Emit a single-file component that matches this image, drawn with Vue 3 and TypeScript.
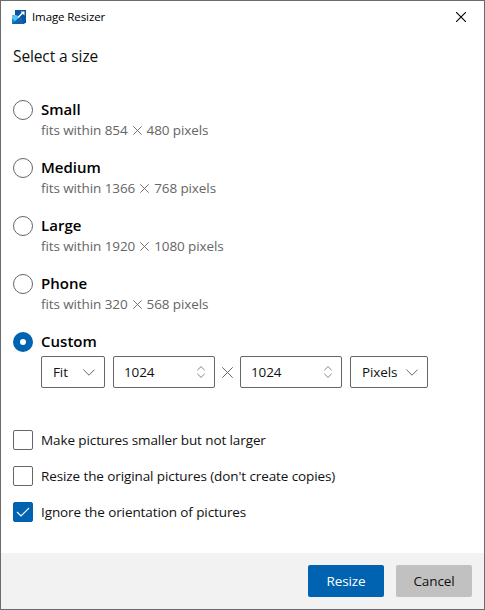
<script setup lang="ts">
import { ref } from 'vue'

interface SizePreset {
  name: string
  width?: number
  height?: number
}

const sizes: SizePreset[] = [
  { name: 'Small', width: 854, height: 480 },
  { name: 'Medium', width: 1366, height: 768 },
  { name: 'Large', width: 1920, height: 1080 },
  { name: 'Phone', width: 320, height: 568 },
  { name: 'Custom' },
]
const selected = ref('Custom')
const customWidth = ref(1024)
const customHeight = ref(1024)

const options = ref([
  { label: 'Make pictures smaller but not larger', checked: false, cls: 'shrink' },
  { label: "Resize the original pictures (don't create copies)", checked: false, cls: 'replace' },
  { label: 'Ignore the orientation of pictures', checked: true, cls: 'orient' },
])
</script>

<template>
  <div class="window">
    <header class="titlebar">
      <svg class="app-icon" width="14" height="14" viewBox="0 0 14 14">
        <path d="M3 0H14V13H10L3 6Z" fill="#0a55a0" />
        <path d="M0 5H5L10 10V14H0Z" fill="#1583d6" />
        <path d="M0 5H4L7 8L3.5 11.5L0 8.5Z" fill="#50c8f4" />
        <path d="M0 14L7 7.5L13 14Z" fill="#0f62b0" />
        <path d="M6 7.5L11 2.5" fill="none" stroke="#fff" stroke-width="1.6" />
        <path d="M8.5 1.5H12.5V5.5Z" fill="#fff" />
      </svg>
      <span class="title">Image Resizer</span>
      <button class="close" aria-label="Close">
        <svg width="10" height="10" viewBox="0 0 10 10"><path d="M0 0L10 10M10 0L0 10" stroke="#000" stroke-width="1.1" /></svg>
      </button>
    </header>

    <main class="content">
      <h1>Select a size</h1>

      <div class="sizes">
        <div v-for="s in sizes" :key="s.name" class="size" @click="selected = s.name">
          <i class="radio" :class="{ on: selected === s.name }"></i>
          <div class="info">
            <div class="name">{{ s.name }}</div>
            <div v-if="s.width" class="detail">
              <span>fits within {{ s.width }}</span>
              <svg width="9" height="9" viewBox="0 0 9 9"><path d="M.3 .3L8.7 8.7M8.7 .3L.3 8.7" stroke="#666" stroke-width=".9" /></svg>
              <span>{{ s.height }} pixels</span>
            </div>
            <div v-else class="custom">
              <div class="box fit">
                <span>Fit</span>
                <svg width="12" height="7" viewBox="0 0 12 7"><path d="M.4 .6L6 6.2L11.6 .6" fill="none" stroke="#666" /></svg>
              </div>
              <div class="box number">
                <span>{{ customWidth }}</span>
                <svg width="8" height="12" viewBox="0 0 8 12"><path d="M.3 4.2L4 .6L7.7 4.2M.3 7.8L4 11.4L7.7 7.8" fill="none" stroke="#777" stroke-width=".9" /></svg>
              </div>
              <svg class="times" width="11" height="11" viewBox="0 0 11 11"><path d="M.3 .3L10.7 10.7M10.7 .3L.3 10.7" stroke="#666" /></svg>
              <div class="box number">
                <span>{{ customHeight }}</span>
                <svg width="8" height="12" viewBox="0 0 8 12"><path d="M.3 4.2L4 .6L7.7 4.2M.3 7.8L4 11.4L7.7 7.8" fill="none" stroke="#777" stroke-width=".9" /></svg>
              </div>
              <div class="box unit">
                <span>Pixels</span>
                <svg width="12" height="7" viewBox="0 0 12 7"><path d="M.4 .6L6 6.2L11.6 .6" fill="none" stroke="#666" /></svg>
              </div>
            </div>
          </div>
        </div>
      </div>

      <div class="options">
        <div v-for="o in options" :key="o.cls" class="option" @click="o.checked = !o.checked">
          <i class="check" :class="{ on: o.checked }">
            <svg v-if="o.checked" width="14" height="10" viewBox="0 0 14 10"><path d="M1 5L5 9L13 1" fill="none" stroke="#fff" stroke-width="1.1" /></svg>
          </i>
          <span :class="o.cls">{{ o.label }}</span>
        </div>
      </div>
    </main>

    <footer>
      <button class="btn primary">Resize</button>
      <button class="btn">Cancel</button>
    </footer>
  </div>
</template>

<style>
body {
  margin: 0;
  background: #fff;
}
</style>

<style scoped>
.window {
  box-sizing: border-box;
  width: 485px;
  height: 610px;
  border: 1px solid #6b6b6b;
  background: #fff;
  display: flex;
  flex-direction: column;
  font-family: "Open Sans", "Noto Sans", sans-serif;
  font-size: 13.5px;
  letter-spacing: -0.1px;
  color: #111;
  white-space: nowrap;
}
.titlebar {
  display: flex;
  align-items: center;
  height: 32px;
  padding-left: 11px;
}
.title {
  font-size: 11.5px;
  letter-spacing: -0.1px;
  line-height: 16px;
  margin-left: 6px;
  flex: 1;
  color: #000;
}
.close {
  width: 46px;
  height: 32px;
  border: 0;
  padding: 0;
  background: none;
  display: flex;
  align-items: center;
  justify-content: center;
}
.content {
  flex: 1;
  padding: 12px;
}
h1 {
  margin: 0;
  font-size: 15.5px;
  font-weight: 400;
  line-height: 22px;
  letter-spacing: -0.12px;
}
.sizes {
  margin-top: 32px;
}
.size {
  display: flex;
  gap: 8px;
  height: 58px;
}
.radio,
.check {
  box-sizing: border-box;
  flex: none;
  width: 20px;
  height: 20px;
  border: 1px solid #666;
  background: #fff;
}
.radio {
  border-radius: 50%;
  margin-top: 1px;
}
.radio.on {
  border: 7px solid #0063b1;
}
.name {
  font-size: 15px;
  font-weight: 600;
  line-height: 21px;
  letter-spacing: 0.02px;
  color: #000;
}
.detail {
  display: flex;
  align-items: center;
  line-height: 20px;
  color: #666;
  gap: 5px;
}
.custom {
  display: flex;
  align-items: center;
  margin-top: 4px;
}
.box {
  box-sizing: border-box;
  height: 32px;
  border: 1px solid #666;
  border-radius: 2px;
  display: flex;
  align-items: center;
  justify-content: space-between;
  padding: 0 9px 0 11px;
}
.fit {
  width: 64px;
  margin-right: 8px;
}
.number {
  width: 102px;
  padding-left: 10px;
}
.times {
  margin: 0 7px;
}
.unit {
  width: 78px;
  margin-left: 8px;
}
.options {
  margin-top: 41px;
  display: flex;
  flex-direction: column;
  gap: 16px;
}
.option {
  display: flex;
  align-items: center;
  gap: 8px;
  height: 20px;
}
.check {
  border-radius: 2px;
  display: flex;
  align-items: center;
  justify-content: center;
}
.check.on {
  background: #0063b1;
  border-color: #0063b1;
}
footer {
  height: 56px;
  background: #f2f2f2;
  display: flex;
  align-items: center;
  justify-content: flex-end;
  gap: 12px;
  padding-right: 12px;
}
.btn {
  width: 76px;
  height: 32px;
  padding: 0;
  border: 0;
  border-radius: 2px;
  background: #c1c1c1;
  font: inherit;
  letter-spacing: inherit;
  color: #111;
}
.primary {
  background: #0063b1;
  color: #fff;
}
</style>
